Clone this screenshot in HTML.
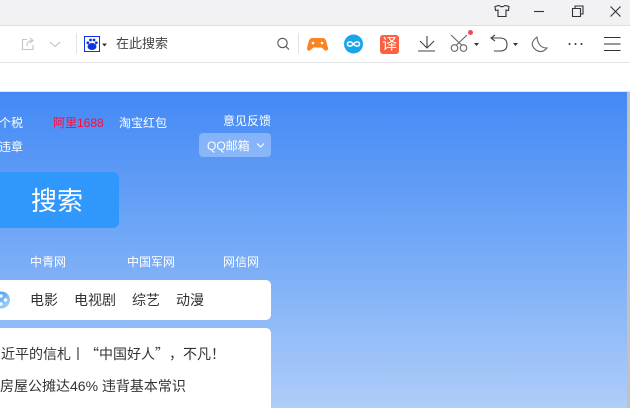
<!DOCTYPE html>
<html><head><meta charset="utf-8">
<style>
html,body{margin:0;padding:0;width:630px;height:408px;overflow:hidden;background:#fff}
body{position:relative;font-family:"Liberation Sans","Noto Sans CJK SC",sans-serif}
.a{position:absolute;white-space:nowrap;line-height:16px}
svg{position:absolute;overflow:visible}
.w{color:#fff;font-size:12px}
.d{color:#333;font-size:14px}
</style></head><body>
<div class="a" style="left:0;top:0;width:630px;height:25px;background:#f2f2f4"></div>
<div class="a" style="left:0;top:25px;width:630px;height:1px;background:#dfdfe1"></div>
<div class="a" style="left:0;top:62px;width:630px;height:1px;background:#e4e4e6"></div>
<div class="a" style="left:0;top:91px;width:630px;height:1px;background:#e4e4e6"></div>
<div class="a" style="left:0;top:92px;width:627px;height:316px;background:linear-gradient(180deg,#4389f5 0%,#72a8f7 47%,#afcdf8 100%)"></div>
<div class="a" style="left:627px;top:92px;width:3px;height:316px;background:#c1c1c1"></div>

<!-- window controls and toolbar icons -->
<svg style="left:0;top:0" width="630" height="62" fill="none" stroke="#333" stroke-width="1.1">
<path d="M495 6.500L499 5.500Q502 8 505 5.500L509 6.500L508.500 10.500L506 10V16.500H498V10L495.500 10.500Z"/>
<path d="M534 11.500H544"/>
<path d="M572.500 8.500H580.500V16.500H572.500ZM575 8.500V6H583V14H580.500"/>
<path d="M610.500 6.500L620.500 16.500M620.500 6.500L610.500 16.500"/>
<!-- share -->
<path stroke="#c4c4c4" d="M27 39.500H22.500V49.500H33V45M27 46Q27 40.500 33 40.500M30 38L33 40.500L30 43"/>
<path stroke="#c0c0c0" d="M50 42L55 46.500L60 42"/>
<path stroke="#e4e4e6" d="M76.500 33V54"/>
<!-- search -->
<circle cx="282.500" cy="43" r="4.700" stroke="#555"/>
<path stroke="#555" d="M286 46.500L289 49.500"/>
<path stroke="#e4e4e6" d="M298.500 33V54"/>
<!-- download -->
<path stroke="#444" d="M427 36V47.500M420 41L427 48L434 41M418 51H435"/>
<!-- scissors -->
<circle cx="454.500" cy="48" r="3.300" stroke="#666"/>
<circle cx="463.500" cy="48" r="3.300" stroke="#666"/>
<path stroke="#666" d="M451 35L462 45.500M467 35L456 45.500"/>
<!-- undo -->
<path stroke="#444" d="M491 38H500Q507 38 507 44.500Q507 51 500 51H494M495 35L491 38L495 41"/>
<!-- moon -->
<path stroke="#666" d="M537 37Q528 44 536 50Q542 54 547 48Q538 48 537 37Z"/>
<!-- menu -->
<path d="M604 37.500H620.500M604 44H620.500M604 50.500H620.500"/>
</svg>
<svg style="left:0;top:0" width="630" height="62">
<path d="M102 43.500h5l-2.500 3z" fill="#333"/>
<path d="M474 43h5l-2.500 3z" fill="#333"/>
<path d="M513 43h5l-2.500 3z" fill="#333"/>
<circle cx="470.500" cy="32.500" r="2.500" fill="#f5455f"/>
<circle cx="569.500" cy="44" r="1" fill="#333"/><circle cx="575.500" cy="44" r="1" fill="#333"/><circle cx="581.500" cy="44" r="1" fill="#333"/>
<!-- game -->
<path d="M312.500 38H322.500Q325 38 326 40.500L328 48Q328 51.500 325 50.500L321.500 47.500H313.500L310 50.500Q307 51.500 307 48L309 40.500Q310 38 312.500 38Z" fill="#fa8323"/>
<circle cx="313" cy="43" r="1.300" fill="#fff"/><circle cx="322" cy="43" r="1.300" fill="#fff"/>
<!-- loop -->
<circle cx="353.500" cy="44" r="9.500" fill="#19a5ec"/>
<path d="M353.500 44C351 41 347.500 41.500 347.500 44C347.500 46.500 351 47 353.500 44C356 41 359.500 41.500 359.500 44C359.500 46.500 356 47 353.500 44Z" fill="none" stroke="#fff" stroke-width="1.500"/>
<!-- translate -->
<rect x="380" y="35" width="19" height="19" rx="3" fill="#fb6041"/>
<!-- baidu -->
<rect x="84.500" y="36.500" width="15" height="15" fill="#fff" stroke="#0c35e6"/>
<g fill="#0c35e6"><ellipse cx="92" cy="46.500" rx="4.500" ry="3.500"/><circle cx="87.800" cy="42.800" r="1.400"/><circle cx="90.500" cy="40" r="1.400"/><circle cx="94" cy="40" r="1.400"/><circle cx="96.300" cy="42.800" r="1.400"/></g>
</svg>
<div class="a" style="left:382px;top:36px;color:#fff;font-size:15px;line-height:17px">译</div>

<div class="a" style="left:116px;top:36px;font-size:13px;color:#444">在此搜索</div>

<!-- page text -->
<div class="a w" style="left:-1px;top:115px">个税</div>
<div class="a" style="left:53px;top:115px;font-size:12px;color:#ff0a3c">阿里1688</div>
<div class="a w" style="left:119px;top:115px">淘宝红包</div>
<div class="a w" style="left:223px;top:113px">意见反馈</div>
<div class="a w" style="left:-1px;top:139px">违章</div>

<div class="a" style="left:199px;top:133px;width:72px;height:24px;border-radius:4px;background:rgba(255,255,255,.3)"></div>
<div class="a w" style="left:207px;top:138px">QQ邮箱</div>
<svg style="left:0;top:0" width="280" height="160" fill="none"><path d="M257 143.500L260.500 147L264 143.500" stroke="#fff" stroke-width="1.100"/></svg>

<div class="a" style="left:-8px;top:172px;width:127px;height:56px;border-radius:6px;background:#3098fc"></div>
<div class="a" style="left:31px;top:186px;color:#fff;font-size:26px;line-height:30px">搜索</div>

<div class="a w" style="left:30px;top:253.500px">中青网</div>
<div class="a w" style="left:127px;top:253.500px">中国军网</div>
<div class="a w" style="left:223px;top:253.500px">网信网</div>

<div class="a" style="left:-8px;top:280px;width:279px;height:40px;border-radius:5px;background:#fff"></div>
<svg style="left:0;top:280px" width="30" height="40"><defs><linearGradient id="f" x1="0" y1="0" x2="1" y2="1"><stop offset="0" stop-color="#2f95ee"/><stop offset="1" stop-color="#b5dcf8"/></linearGradient></defs><circle cx="1.500" cy="20" r="8.500" fill="url(#f)"/><circle cx="1" cy="16" r="1.700" fill="#fff"/><circle cx="5.500" cy="20" r="1.700" fill="#fff"/><circle cx="1" cy="24" r="1.700" fill="#fff"/></svg>
<div class="a d" style="left:30px;top:292px">电影</div>
<div class="a d" style="left:74px;top:292px">电视剧</div>
<div class="a d" style="left:132px;top:292px">综艺</div>
<div class="a d" style="left:176px;top:292px">动漫</div>

<div class="a" style="left:-8px;top:328px;width:279px;height:90px;border-radius:5px;background:#fff"></div>
<div class="a d" style="left:1px;top:346px;font-family:'Noto Sans CJK SC',sans-serif;text-spacing-trim:space-all">近平的信札丨“中国好人”，不凡！</div>
<div class="a d" style="left:0;top:378px">房屋公摊达46% 违背基本常识</div>
</body></html>
